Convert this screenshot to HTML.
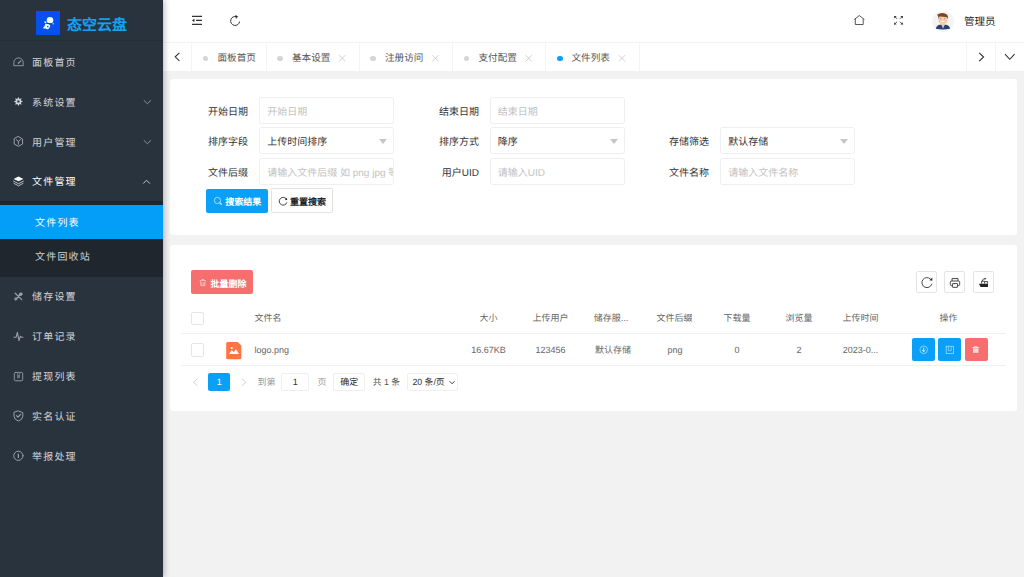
<!DOCTYPE html>
<html lang="zh-CN"><head><meta charset="utf-8">
<style>
*{margin:0;padding:0;box-sizing:border-box}
html,body{width:1024px;height:577px;overflow:hidden;background:#f2f2f2;font-family:"Liberation Sans",sans-serif;color:#333;text-rendering:geometricPrecision}
.a{position:absolute;white-space:nowrap}
svg{position:absolute;overflow:visible}
#side{position:absolute;left:0;top:0;width:163px;height:577px;background:#28333e;box-shadow:1px 0 6px rgba(0,0,0,.3);z-index:5}
#logo{position:absolute;left:0;top:0;width:163px;height:41px;border-bottom:1px solid rgba(0,0,0,.1)}
.mi{position:absolute;left:32px;color:rgba(255,255,255,.8);font-size:10px;letter-spacing:1.2px;line-height:40px;height:40px;white-space:nowrap}
.sub{position:absolute;left:0;top:201px;width:163px;height:76px;background:#1f262e}
.si{position:absolute;left:0;width:163px;height:34px;line-height:38.5px;color:rgba(255,255,255,.8);font-size:10px;letter-spacing:1.2px;padding-left:35px}
.si.on{background:#049ef8;color:#fff}
#header{position:absolute;left:163px;top:0;width:861px;height:42px;background:#fff}
#tabs{position:absolute;left:163px;top:42px;width:861px;height:29px;background:#fff;border-top:1px solid #f3f3f3}
.tab{position:absolute;top:42px;height:29px;border-right:1px solid #f4f4f4;font-size:9.6px;color:#555}
.tab .dot{position:absolute;top:13.5px;width:5.5px;height:5.5px;border-radius:50%;background:#d5d5d5}
.tab .tt{position:absolute;top:2px;line-height:29px}
.card{position:absolute;background:#fff;border-radius:3px}
.lab{position:absolute;font-size:10px;color:#333;line-height:31px;text-align:right;width:60px}
.inp{position:absolute;width:135.3px;height:26.5px;border:1px solid #efefef;border-radius:2.5px;font-size:10px;line-height:29px;padding-left:7.2px;color:#c2c2c2;overflow:hidden;white-space:nowrap}
.inp.v{color:#333}
.tri2{position:absolute;right:6.2px;top:10.4px}
.th{position:absolute;top:311px;font-size:9px;color:#666;line-height:14px;transform:translateX(-50%);white-space:nowrap}
.td{position:absolute;top:343px;font-size:9px;color:#666;line-height:14px;transform:translateX(-50%);white-space:nowrap}
.ib{position:absolute;top:271.3px;width:20.8px;height:21.6px;border:1px solid #e4e4e4;border-radius:2px}
.ab{position:absolute;top:338px;width:23px;height:22.5px;border-radius:2px;background:#0ba0f7}
.cb{position:absolute;left:191.3px;width:13px;height:13.4px;border:1px solid #e6e6e6;border-radius:2px;background:#fff}
.pg{position:absolute;font-size:9px;color:#999;line-height:19.5px;white-space:nowrap}
</style></head><body>
<div id="side">
  <div id="logo">
    <div class="a" style="left:36px;top:11px;width:24px;height:24px;background:#0650f0"></div>
    <svg width="24" height="24" style="left:36px;top:11px" viewBox="0 0 24 24">
      <circle cx="14" cy="9.2" r="3.3" fill="#e6fbfb"/>
      <ellipse cx="14.6" cy="8.6" rx="1.9" ry="1.6" fill="#fff"/>
      <path d="M9.6 12.8 Q12.8 12.2 14.2 14.2 Q14.6 16.8 12.4 17.9 Q10.6 18.6 9.6 17.4 L7.4 17.4 Q6.6 16 8.4 15.6 Q8.8 13.8 9.6 12.8 Z" fill="#e6fbfb"/>
      <ellipse cx="9.4" cy="11.2" rx="1.2" ry="0.9" fill="#e6fbfb" transform="rotate(30 9.4 11.2)"/>
      <ellipse cx="16.8" cy="12.7" rx="1" ry="0.8" fill="#e6fbfb"/>
      <path d="M10.4 12.2 L17 13" stroke="#0836b0" stroke-width="0.9"/>
      <circle cx="11.8" cy="15.6" r="0.8" fill="#0a4ad8"/>
    </svg>
    <div class="a" style="left:67px;top:13.5px;font-size:15px;line-height:24px;color:#16a0f5;font-weight:bold">态空云盘</div>
  </div>
  <div class="mi" style="top:43.5px">面板首页</div>
  <div class="mi" style="top:83.5px">系统设置</div>
  <div class="mi" style="top:123.5px">用户管理</div>
  <div class="mi" style="top:163.3px;color:#fff">文件管理</div>
  <div class="sub">
    <div class="si on" style="top:4px">文件列表</div>
    <div class="si" style="top:38px">文件回收站</div>
  </div>
  <div class="mi" style="top:278.3px">储存设置</div>
  <div class="mi" style="top:318.3px">订单记录</div>
  <div class="mi" style="top:358.3px">提现列表</div>
  <div class="mi" style="top:398.3px">实名认证</div>
  <div class="mi" style="top:438.3px">举报处理</div>
  <svg width="163" height="577" style="left:0;top:0" fill="none" stroke="#9ba0a7" stroke-width="1" stroke-linecap="round" stroke-linejoin="round">
    <!-- gauge -->
    <path d="M13.8 65.3 L13.8 62.6 A4.7 4.7 0 0 1 23.2 62.6 L23.2 65.3 Z" stroke-width="0.9"/>
    <path d="M18.3 63.3 L20.8 60.8" stroke-width="1.2"/>
    <!-- gear -->
    <path fill="#d0d3d6" stroke="none" fill-rule="evenodd" d="M18.4 96.9 L19.5 99 L21.6 98.3 L20.9 100.4 L23 101.5 L20.9 102.6 L21.6 104.7 L19.5 104 L18.4 106.1 L17.3 104 L15.2 104.7 L15.9 102.6 L13.8 101.5 L15.9 100.4 L15.2 98.3 L17.3 99 Z M17.3 100.4 L19.5 100.4 L19.5 102.6 L17.3 102.6 Z"/>
    <!-- cube -->
    <path d="M18.4 136.6 L22.6 139 L22.6 144 L18.4 146.3 L14.2 144 L14.2 139 Z"/>
    <path d="M16.2 139.6 L18.4 141.4 L20.6 139.6 M18.4 141.4 L18.4 144.2"/>
    <!-- layers -->
    <path fill="#fff" stroke="none" d="M13.6 178.9 L18.5 176.5 L23.4 178.9 L18.5 181.3 Z"/>
    <path d="M13.6 181.2 L18.5 183.7 L23.4 181.2 M14 183.4 L18.5 185.8 L23 183.4" stroke="#c8ccd0" stroke-width="0.9"/>
    <!-- tools -->
    <path d="M15.2 293.2 L21.8 299.6 M21.8 293.2 L15.2 299.6" stroke-width="1.3"/>
    <circle cx="20.6" cy="294.3" r="1.3" fill="#a3a8ae"/>
    <circle cx="15.8" cy="298.9" r="1.1"/>
    <!-- pulse -->
    <path d="M13.9 337.2 L16.2 337.2 L17.4 332.3 L19 340.6 L20.4 336.2 L21.3 337.2 L23 337.2" stroke-width="1.1"/>
    <!-- doc -->
    <rect x="14.3" y="372.4" width="8.4" height="8.4" rx="1.3" stroke-width="0.9"/>
    <path d="M17.1 372.6 L19.9 372.6 L19.9 378.6 L18.5 377.8 L17.1 378.6 Z" fill="#6f767e" stroke="none"/>
    <circle cx="18.5" cy="373.9" r="0.8" fill="#2a333d" stroke="none"/>
    <!-- shield -->
    <path d="M18.4 411 L22.8 412.6 L22.8 416.2 Q22.6 419.6 18.4 421 Q14.2 419.6 14 416.2 L14 412.6 Z"/>
    <path d="M16.4 415.6 L18 417.2 L20.5 414.3" stroke-width="1.2"/>
    <!-- info -->
    <circle cx="18.4" cy="455.8" r="4.6"/>
    <path d="M18.4 454.2 L18.4 457.6" stroke-width="1.2"/>
    <!-- chevrons -->
    <path d="M144.1 100.5 L147.4 103.7 L150.7 100.5 M144.1 140.5 L147.4 143.7 L150.7 140.5" stroke="#959ba2" stroke-width="0.9"/>
    <path d="M143.5 183.3 L146.5 180.2 L149.6 183.3" stroke="#c4c8cc" stroke-width="1"/>
  </svg>
</div>
<div id="header"></div>
<svg width="1024" height="42" style="left:0;top:0" fill="none" stroke="#333" stroke-width="1.1">
  <path d="M192 16.4 L202 16.4 M196 20.4 L202 20.4 M192 24.3 L202 24.3" stroke-width="1.2"/>
  <path d="M192.3 20.4 L194.2 19.2 L194.2 21.6 Z" fill="#333" stroke-width="0.6"/>
  <path d="M239.6 21.5 A4.5 4.5 0 1 1 236.6 16.7" stroke-width="1"/>
  <path d="M235.6 15.6 L237.6 16.6 L236.2 18.3 Z" fill="#333" stroke-width="0.8"/>
  <path d="M854.2 19.6 L859.3 15.5 L864.4 19.6 M855.3 18.8 L855.3 24.5 L863.2 24.5 L863.2 18.8" stroke="#444" stroke-width="0.9"/>
  <path d="M894.4 16.2 L897 18.8 M902.6 16.2 L900 18.8 M894.4 24.4 L897 21.8 M902.6 24.4 L900 21.8" stroke="#333" stroke-width="0.9"/>
  <path d="M894.2 16 L896.6 16 L894.2 18.4 Z M902.8 16 L900.4 16 L902.8 18.4 Z M894.2 24.6 L896.6 24.6 L894.2 22.2 Z M902.8 24.6 L900.4 24.6 L902.8 22.2 Z" fill="#333" stroke="none"/>
</svg>
<div class="a" style="left:932px;top:10.8px;width:21.5px;height:21.5px;border-radius:50%;background:#f4f4f4"></div>
<svg width="22" height="22" style="left:932px;top:10.8px" viewBox="0 0 22 22">
  <path d="M3.9 17.8 Q4.2 14.6 7.6 13.8 L14.2 13.8 Q17.6 14.6 18 17.8 Q11 19.4 3.9 17.8 Z" fill="#2c3f70"/>
  <path d="M9.4 13.8 L11 17.6 L12.8 13.8 Z" fill="#eef0f4"/>
  <path d="M10.5 14.4 L11 17.4 L11.5 14.4 Z" fill="#6a7896"/>
  <rect x="9.6" y="11.6" width="2.8" height="2.4" fill="#f0c09a"/>
  <path d="M6.4 6.2 Q6.4 4.2 10.9 4.2 Q15.4 4.2 15.4 6.4 L15.2 10.6 Q14.4 13.2 10.9 13.2 Q7.4 13.2 6.6 10.6 Z" fill="#f8cda6"/>
  <path d="M5.3 3.6 Q8 1.6 12 2.2 Q15.6 2.6 16 6 L15.8 8.4 L15 6.2 Q11 5.6 7.4 5.6 L6.6 8 Q6.2 5.4 5.3 3.6 Z" fill="#7a452a"/>
  <circle cx="8.7" cy="7.8" r="0.55" fill="#5a7aa0"/><circle cx="12.6" cy="7.8" r="0.55" fill="#5a7aa0"/>
  <path d="M8.8 9.9 Q10.9 12.2 13 9.9 Z" fill="#fff"/>
  <circle cx="7.6" cy="10" r="0.8" fill="#f3b08e" opacity=".6"/><circle cx="14.2" cy="10" r="0.8" fill="#f3b08e" opacity=".6"/>
</svg>
<div class="a" style="left:964px;top:11px;font-size:10.5px;line-height:22px;color:#222;font-weight:500">管理员</div>

<div id="tabs"></div>
<div class="tab" style="left:163px;width:29px"></div>
<div class="tab" style="left:192px;width:74.5px"><span class="dot" style="left:10.8px"></span><span class="tt" style="left:25.5px">面板首页</span></div>
<div class="tab" style="left:266.5px;width:93px"><span class="dot" style="left:10.8px"></span><span class="tt" style="left:25.5px">基本设置</span></div>
<div class="tab" style="left:359.5px;width:93.5px"><span class="dot" style="left:10.8px"></span><span class="tt" style="left:25.5px">注册访问</span></div>
<div class="tab" style="left:453px;width:93px"><span class="dot" style="left:10.8px"></span><span class="tt" style="left:25.5px">支付配置</span></div>
<div class="tab" style="left:546px;width:93.5px"><span class="dot" style="left:11.2px;background:#0ba0f7"></span><span class="tt" style="left:25.5px">文件列表</span></div>
<div class="tab" style="left:966px;width:29.5px;border-left:1px solid #f4f4f4"></div>
<svg width="1024" height="80" style="left:0;top:0" fill="none" stroke="#333" stroke-width="1.1">
  <path d="M179.4 52.8 L175.2 56.8 L179.4 60.8"/>
  <path d="M979.2 52.8 L983.6 57 L979.2 61.2"/>
  <path d="M1005 54.2 L1009.8 59.3 L1014.6 54.2"/>
  <g stroke="#c2c2c2" stroke-width="0.75">
    <path d="M339 55.1 L345.4 61.5 M345.4 55.1 L339 61.5"/>
    <path d="M432.3 55.1 L438.7 61.5 M438.7 55.1 L432.3 61.5"/>
    <path d="M525.5 55.1 L531.9 61.5 M531.9 55.1 L525.5 61.5"/>
    <path d="M618.8 55.1 L625.2 61.5 M625.2 55.1 L618.8 61.5"/>
  </g>
</svg>

<div class="card" style="left:170px;top:79px;width:847px;height:156px"></div>
<div class="lab" style="left:188px;top:97px">开始日期</div>
<div class="inp" style="left:259px;top:97px">开始日期</div>
<div class="lab" style="left:419px;top:97px">结束日期</div>
<div class="inp" style="left:489.5px;top:97px">结束日期</div>
<div class="lab" style="left:188px;top:127.2px">排序字段</div>
<div class="inp v" style="left:259px;top:127.2px">上传时间排序<svg class="tri2" width="8" height="5" viewBox="0 0 8 5"><path d="M0 0 L8 0 L4 4.9 Z" fill="#c6c6c6"/></svg></div>
<div class="lab" style="left:419px;top:127.2px">排序方式</div>
<div class="inp v" style="left:489.5px;top:127.2px">降序<svg class="tri2" width="8" height="5" viewBox="0 0 8 5"><path d="M0 0 L8 0 L4 4.9 Z" fill="#c6c6c6"/></svg></div>
<div class="lab" style="left:649px;top:127.2px">存储筛选</div>
<div class="inp v" style="left:720px;top:127.2px">默认存储<svg class="tri2" width="8" height="5" viewBox="0 0 8 5"><path d="M0 0 L8 0 L4 4.9 Z" fill="#c6c6c6"/></svg></div>
<div class="lab" style="left:188px;top:158.4px">文件后缀</div>
<div class="inp" style="left:259px;top:158.4px">请输入文件后缀 如 png jpg 等</div>
<div class="lab" style="left:419px;top:158.4px">用户UID</div>
<div class="inp" style="left:489.5px;top:158.4px">请输入UID</div>
<div class="lab" style="left:649px;top:158.4px">文件名称</div>
<div class="inp" style="left:720px;top:158.4px">请输入文件名称</div>
<div class="a" style="left:206.3px;top:189.2px;width:61.5px;height:24.1px;background:#0ba0f7;border-radius:2px;color:#fff;font-size:9px;line-height:27.5px;padding-left:19px;font-weight:bold">搜索结果</div>
<div class="a" style="left:271px;top:188.3px;width:62.3px;height:24.5px;border:1px solid #e2e2e2;border-radius:2px;color:#222;font-size:9px;line-height:27.5px;padding-left:18px;font-weight:bold">重置搜索</div>
<svg width="1024" height="577" style="left:0;top:0" fill="none">
  <circle cx="217.45" cy="200.45" r="3.1" stroke="rgba(255,255,255,.75)" stroke-width="0.8"/>
  <path d="M220 203 L221.4 204.4" stroke="rgba(255,255,255,.8)" stroke-width="1.2" stroke-linecap="round"/>
  <path d="M286.9 202.4 A3.9 3.9 0 1 1 286.2 198.8" stroke="#333" stroke-width="0.9"/>
  <circle cx="286.3" cy="199.2" r="0.9" fill="#111"/>
</svg>

<div class="card" style="left:170px;top:245px;width:847px;height:166px"></div>
<div class="a" style="left:191.4px;top:270.2px;width:61.4px;height:24.2px;background:#f76e6e;border-radius:2px;color:#fff;font-size:9px;line-height:28.5px;padding-left:19px;font-weight:bold">批量删除</div>
<div class="ib" style="left:916px"></div>
<div class="ib" style="left:944.2px"></div>
<div class="ib" style="left:973px"></div>
<div class="a" style="left:181px;top:333px;width:825px;height:1px;background:#f0f0f0"></div>
<div class="a" style="left:181px;top:365px;width:825px;height:1px;background:#f0f0f0"></div>
<div class="cb" style="top:311.5px"></div>
<div class="cb" style="top:343.3px"></div>
<div class="th" style="left:254.5px;transform:none">文件名</div>
<div class="th" style="left:488.5px">大小</div>
<div class="th" style="left:550.5px">上传用户</div>
<div class="th" style="left:611px">储存服...</div>
<div class="th" style="left:674.5px">文件后缀</div>
<div class="th" style="left:737px">下载量</div>
<div class="th" style="left:799px">浏览量</div>
<div class="th" style="left:860.5px">上传时间</div>
<div class="th" style="left:948.5px">操作</div>

<div class="td" style="left:254.5px;transform:none">logo.png</div>
<div class="td" style="left:488.5px">16.67KB</div>
<div class="td" style="left:550.5px">123456</div>
<div class="td" style="left:613px">默认存储</div>
<div class="td" style="left:675px">png</div>
<div class="td" style="left:737px">0</div>
<div class="td" style="left:799px">2</div>
<div class="td" style="left:860.5px">2023-0...</div>
<div class="ab" style="left:912px"></div>
<div class="ab" style="left:938px"></div>
<div class="ab" style="left:964.5px;background:#f76e6e"></div>

<div class="a" style="left:208.4px;top:372.9px;width:21.6px;height:18px;background:#0ba0f7;border-radius:2px;color:#fff;font-size:9px;line-height:18px;text-align:center">1</div>
<div class="pg" style="left:257.5px;top:373px">到第</div>
<div class="a" style="left:281.2px;top:372.9px;width:28.3px;height:18.3px;border:1px solid #efefef;border-radius:2px;font-size:9px;line-height:17.8px;text-align:center;color:#333">1</div>
<div class="pg" style="left:317.6px;top:373px">页</div>
<div class="a" style="left:333px;top:372.9px;width:32.3px;height:18px;border:1px solid #efefef;border-radius:2px;font-size:9px;line-height:17.5px;text-align:center;color:#222;font-weight:500">确定</div>
<div class="pg" style="left:372.8px;top:373px;color:#555;font-size:8.8px">共 1 条</div>
<div class="a" style="left:406.6px;top:372.9px;width:51.3px;height:18px;border:1px solid #efefef;border-radius:2px;font-size:8.8px;line-height:17.5px;padding-left:4.8px;color:#333">20 条/页</div>
<svg width="1024" height="577" style="left:0;top:0" fill="none">
  <path d="M227.6 341.9 L237.6 341.9 L241.3 345.6 L241.3 357.7 Q241.3 359.2 239.8 359.2 L227.6 359.2 Q226.2 359.2 226.2 357.7 L226.2 343.4 Q226.2 341.9 227.6 341.9 Z" fill="#ff7444"/>
  <circle cx="231.7" cy="348" r="1.1" fill="#fff"/>
  <path d="M229 354 L231.8 350 L233.6 352.2 L236 349.2 L239 354 Z" fill="#fff"/>
  <!-- trash in batch delete -->
  <g stroke="rgba(255,255,255,.75)" stroke-width="0.8">
    <path d="M199.7 280.6 L206 280.6 M201.9 280.4 L201.9 279.5 L203.8 279.5 L203.8 280.4 M200.6 281.4 L200.9 285.6 L204.8 285.6 L205.1 281.4 M201.9 282.3 L201.9 284.8 M203.8 282.3 L203.8 284.8" stroke-width="0.7"/>
  </g>
  <!-- toolbar icons -->
  <path d="M931.8 283.8 A5 5 0 1 1 930.6 279.2" stroke="#333" stroke-width="0.9"/>
  <path d="M932.4 277.6 L932.3 280.7 L929.3 280.2 Z" fill="#333"/>
  <g stroke="#444" stroke-width="1">
    <path d="M952 281 L952 278.6 L958 278.6 L958 281"/>
    <rect x="950.3" y="281" width="9.4" height="4.6" rx="1.3"/>
    <rect x="952.4" y="283.6" width="5.2" height="3.7" rx="0.4" fill="#fff"/>
  </g>
  <path d="M978.9 283.8 L988 283.8 L988 286.6 Q988 287.1 987.4 287.1 L980.6 287.1 Z" fill="#222"/>
  <path d="M981.6 283.6 L981.6 281.2 L984.6 281.2 M984.6 283.6 L984.6 281.6 L987.6 281.6 L987.6 283.6" stroke="#333" stroke-width="0.9"/>
  <path d="M982.4 281 L982.6 279.8 Q983.4 278.9 985.2 278.7" stroke="#333" stroke-width="0.9"/>
  <path d="M984.6 277.8 L986.4 278.6 L984.8 279.8 Z" fill="#333"/>
  <!-- action icons -->
  <circle cx="923.7" cy="349.8" r="3.8" stroke="rgba(255,255,255,.7)" stroke-width="0.7"/>
  <path d="M923.7 347.6 L923.7 351.6 M922 350 L923.7 351.7 L925.4 350" stroke="rgba(255,255,255,.85)" stroke-width="0.9"/>
  <rect x="946.2" y="346.2" width="7.4" height="7.4" stroke="rgba(255,255,255,.7)" stroke-width="0.7"/>
  <path d="M948.4 346.5 L948.4 350.6 L951.2 350.6 L951.2 346.5" stroke="rgba(255,255,255,.6)" stroke-width="0.7"/>
  <path d="M972.3 347.6 L979.2 347.6" stroke="rgba(255,255,255,.8)" stroke-width="1"/>
  <path d="M974.5 347.2 L974.5 346.6 L977 346.6 L977 347.2" stroke="rgba(255,255,255,.8)" stroke-width="0.8"/>
  <rect x="973" y="348.3" width="5.5" height="4.6" fill="rgba(255,255,255,.7)"/>
  <!-- pager arrows -->
  <path d="M197.6 378.6 L193.6 382.2 L197.6 385.8" stroke="#ccc" stroke-width="0.9"/>
  <path d="M241.8 378.6 L245.8 382.2 L241.8 385.8" stroke="#ccc" stroke-width="0.9"/>
  <path d="M449.6 381.2 L452.1 383.8 L454.6 381.2" stroke="#333" stroke-width="0.9"/>
</svg>
</body></html>
